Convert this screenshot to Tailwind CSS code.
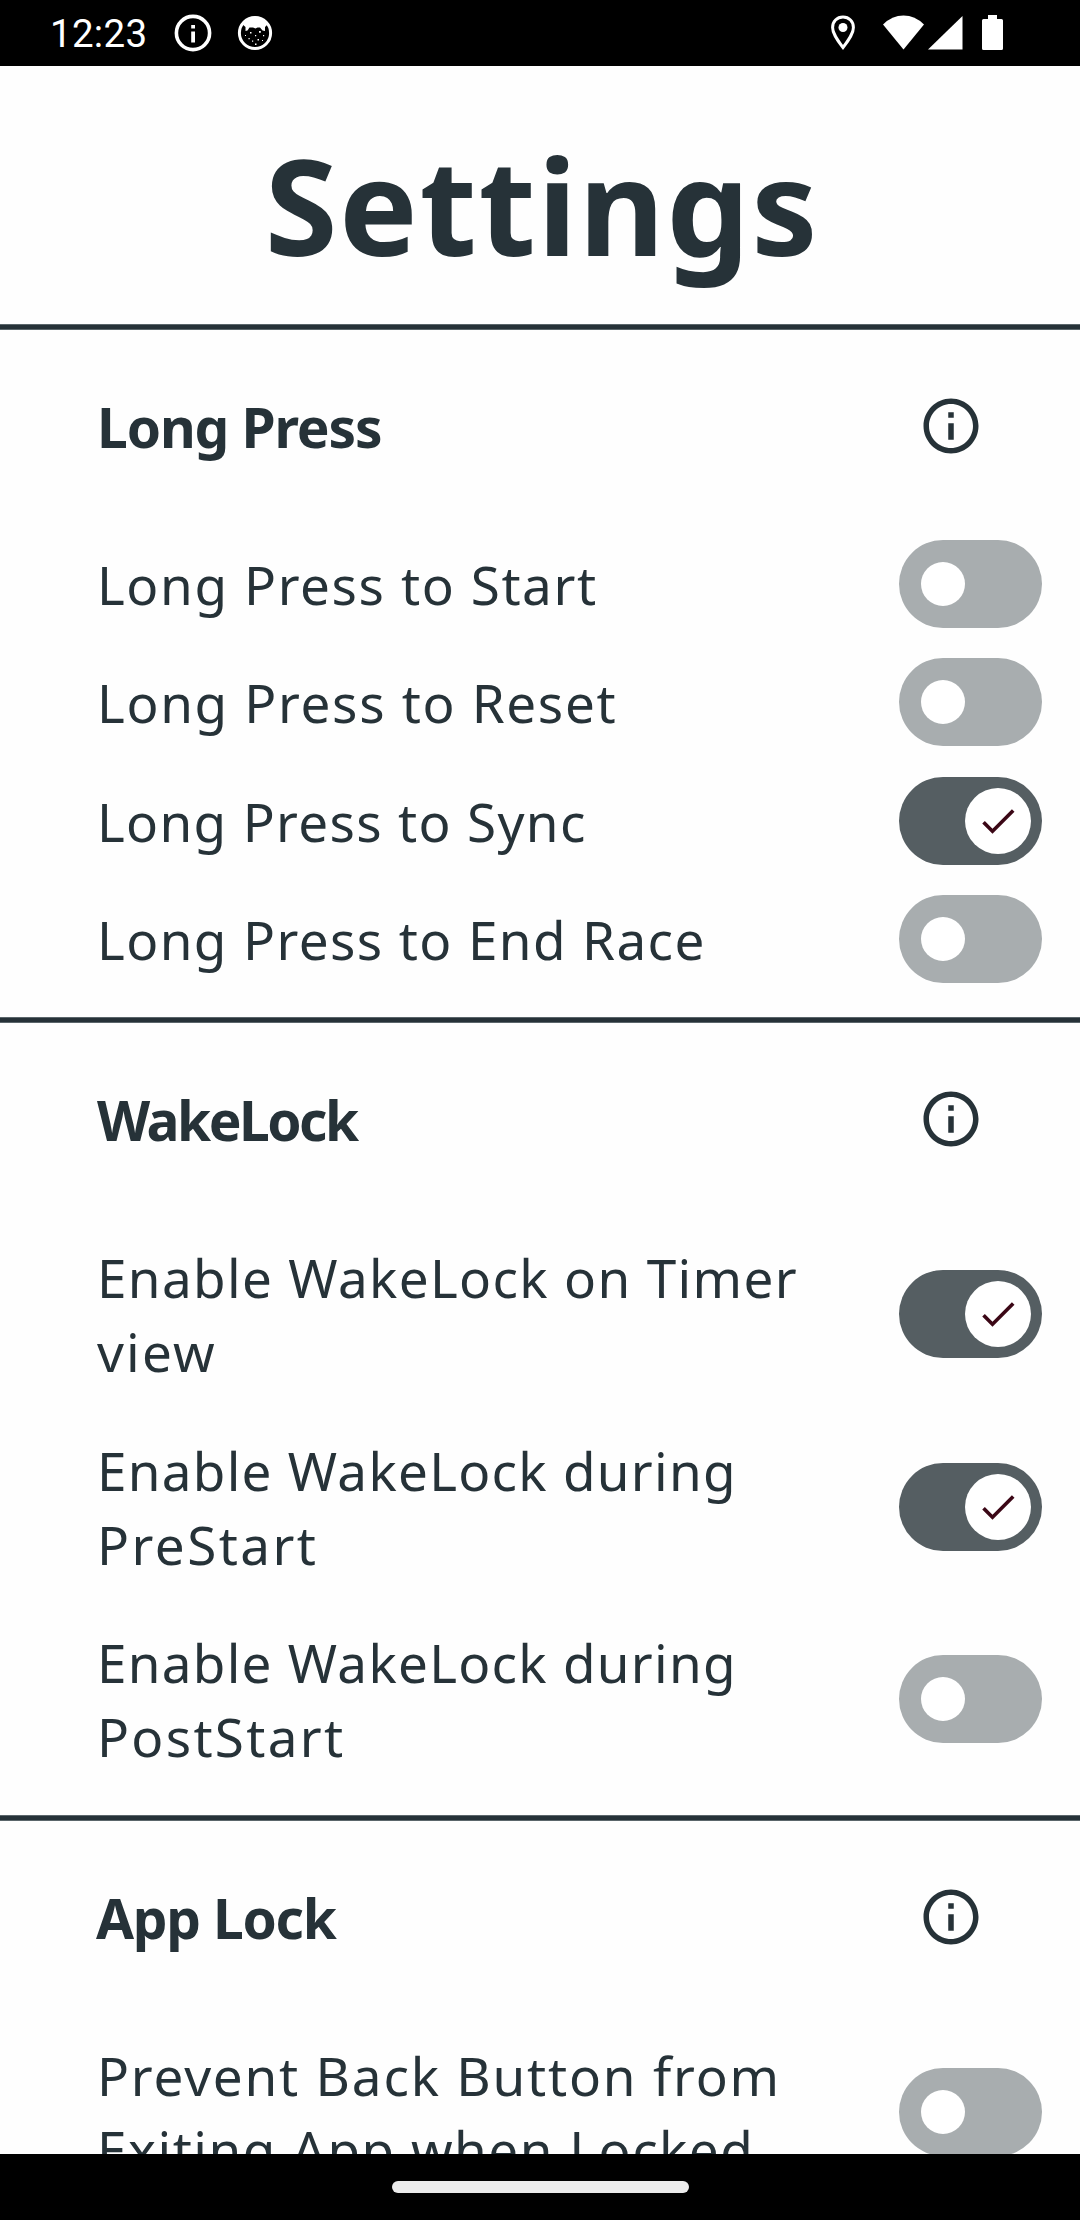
<!DOCTYPE html>
<html lang="en">
<head>
	<meta charset="UTF-8">
	<meta name="viewport" content="width=device-width, initial-scale=1.0">
	<title>Settings</title>
	<script src="https://cdn.jsdelivr.net/npm/@tailwindcss/browser@4"></script>
</head>
<body class="w-[1080px] h-[2220px] overflow-hidden flex flex-col bg-[#fefefe] text-[#263238] font-['Noto_Sans',sans-serif]">
	<!-- Shared icons -->
	<svg class="hidden">
		<symbol id="info" viewBox="0 0 24 24">
			<path d="M11 7h2v2h-2zm0 4h2v6h-2zm1-9C6.48 2 2 6.48 2 12s4.48 10 10 10 10-4.48 10-10S17.52 2 12 2zm0 18c-4.41 0-8-3.59-8-8s3.59-8 8-8 8 3.59 8 8-3.59 8-8 8z"/>
		</symbol>
		<symbol id="check" viewBox="0 0 24 24">
			<path d="M9 16.17 4.83 12l-1.42 1.41L9 19 21 7l-1.41-1.41z"/>
		</symbol>
	</svg>

	<!-- Status bar -->
	<div class="h-[66px] shrink-0 bg-black text-white fill-white flex items-center justify-between pl-[50px] pr-[77px]">
		<div class="flex items-center">
			<span class="w-[121px] font-[Roboto,sans-serif] text-[38.5px] leading-none tracking-[0.3px] pt-[3px]">12:23</span>
			<svg class="w-11 h-11" viewBox="0 0 44 44">
				<circle cx="22" cy="22" r="16.6" fill="none" stroke="white" stroke-width="3.6"/>
				<path d="M20.2 14h3.8v3.6h-3.8zM20.2 20.5h3.8v11h-3.8z"/>
			</svg>
			<svg class="w-9 h-9 ml-[22px]" viewBox="0 0 36 36">
				<circle cx="18" cy="18" r="15.6" fill="none" stroke="white" stroke-width="3"/>
				<path d="M5 9Q10 1.500 18 1.500T31 9L28 12V16L25.500 15.500L23 12.500H20.500L18.500 13.500L16 12.500H12.500L10.500 15.500L8.500 16V12Z"/>
				<path d="M13 17h1.500v1.500H13zM22 16h1.800v1.800H22zM8 20h1v1H8zM18 20h1.200v1.200H18zM26 20h1.200v1.200H26zM11.500 23h1.200v1.200h-1.200zM15 25.500h1.200v1.200H15zM20.500 24h1.500v1.500h-1.500zM25 25h1v1h-1zM18 28.500h1.500V30H18z"/>
			</svg>
		</div>
		<div class="flex items-center">
			<svg class="w-[26px] h-9" viewBox="0 0 26 36">
				<path d="M13 2C6.900 2 2.600 6.600 2.600 12.400C2.600 19.500 13 32.500 13 32.500S23.400 19.500 23.400 12.400C23.400 6.600 19.100 2 13 2Z" fill="none" stroke="white" stroke-width="3"/>
				<circle cx="13" cy="12.500" r="4.500"/>
			</svg>
			<svg class="w-[42px] h-9 ml-[27px]" viewBox="0 0 42 36">
				<path d="M0 9.500Q9 .500 20.500 .500T41 9.500L20.500 34.500Z"/>
			</svg>
			<svg class="w-[35px] h-9 ml-[3px]" viewBox="0 0 35 36">
				<path d="M34.500 1V34.500H0Z"/>
			</svg>
			<svg class="w-[21px] h-9 ml-[19px]" viewBox="0 0 21 36">
				<path d="M6 0h9v4h4.500q1.500 0 1.500 1.500v28q0 1.500-1.500 1.500h-18q-1.500 0-1.500-1.500v-28q0-1.500 1.500-1.500H6z"/>
			</svg>
		</div>
	</div>

	<main class="h-[2088px] shrink-0 overflow-hidden">
		<header class="h-[258px] pt-[19px] pl-1 flex items-center justify-center">
			<h1 class="text-[132px] leading-none font-bold tracking-[1.7px]">Settings</h1>
		</header>

		<!-- Long Press -->
		<section class="h-[693px]">
			<div class="h-1.5 bg-[#263238] border-y border-[#5b666b]"></div>
			<div class="h-[195px] pb-[3px] pl-[97px] pr-24 flex items-center justify-between">
				<h2 class="pt-0.5 text-[55px] font-bold tracking-[-1.1px]">Long Press</h2>
				<svg class="w-[66px] h-[66px] fill-[#263238]"><use href="#info"/></svg>
			</div>
			<div class="h-[118.25px] pl-[97px] pr-[38px] flex items-center justify-between">
				<span class="pt-0.5 text-[53px] leading-[74px] tracking-[1.6px]">Long Press to Start</span>
				<div class="w-[143px] h-[88px] rounded-full bg-[#a8adaf] flex items-center pl-[22px]">
					<div class="w-11 h-11 rounded-full bg-white"></div>
				</div>
			</div>
			<div class="h-[118.25px] pl-[97px] pr-[38px] flex items-center justify-between">
				<span class="pt-0.5 text-[53px] leading-[74px] tracking-[1.67px]">Long Press to Reset</span>
				<div class="w-[143px] h-[88px] rounded-full bg-[#a8adaf] flex items-center pl-[22px]">
					<div class="w-11 h-11 rounded-full bg-white"></div>
				</div>
			</div>
			<div class="h-[118.25px] pl-[97px] pr-[38px] flex items-center justify-between">
				<span class="pt-0.5 text-[53px] leading-[74px] tracking-[1.34px]">Long Press to Sync</span>
				<div class="w-[143px] h-[88px] rounded-full bg-[#555e62] flex items-center justify-end pr-[11px]">
					<div class="w-[66px] h-[66px] rounded-full bg-white flex items-center justify-center">
						<svg class="w-11 h-11 fill-[#3b0716]"><use href="#check"/></svg>
					</div>
				</div>
			</div>
			<div class="h-[118.25px] pl-[97px] pr-[38px] flex items-center justify-between">
				<span class="pt-0.5 text-[53px] leading-[74px] tracking-[1.4px]">Long Press to End Race</span>
				<div class="w-[143px] h-[88px] rounded-full bg-[#a8adaf] flex items-center pl-[22px]">
					<div class="w-11 h-11 rounded-full bg-white"></div>
				</div>
			</div>
		</section>

		<!-- WakeLock -->
		<section class="h-[798px]">
			<div class="h-1.5 bg-[#263238] border-y border-[#5b666b]"></div>
			<div class="h-[195px] pb-[3px] pl-[97px] pr-24 flex items-center justify-between">
				<h2 class="pt-0.5 text-[55px] font-bold tracking-[-2.5px]">WakeLock</h2>
				<svg class="w-[66px] h-[66px] fill-[#263238]"><use href="#info"/></svg>
			</div>
			<div class="h-[192.5px] pl-[97px] pr-[38px] flex items-center justify-between">
				<p class="pt-0.5 text-[53px] leading-[74px]">
					<span class="block tracking-[1.35px]">Enable WakeLock on Timer</span>
					<span class="block tracking-[2.2px]">view</span>
				</p>
				<div class="w-[143px] h-[88px] rounded-full bg-[#555e62] flex items-center justify-end pr-[11px]">
					<div class="w-[66px] h-[66px] rounded-full bg-white flex items-center justify-center">
						<svg class="w-11 h-11 fill-[#3b0716]"><use href="#check"/></svg>
					</div>
				</div>
			</div>
			<div class="h-[192.5px] pl-[97px] pr-[38px] flex items-center justify-between">
				<p class="pt-0.5 text-[53px] leading-[74px]">
					<span class="block tracking-[1.28px]">Enable WakeLock during</span>
					<span class="block tracking-[2.45px]">PreStart</span>
				</p>
				<div class="w-[143px] h-[88px] rounded-full bg-[#555e62] flex items-center justify-end pr-[11px]">
					<div class="w-[66px] h-[66px] rounded-full bg-white flex items-center justify-center">
						<svg class="w-11 h-11 fill-[#3b0716]"><use href="#check"/></svg>
					</div>
				</div>
			</div>
			<div class="h-[192.5px] pl-[97px] pr-[38px] flex items-center justify-between">
				<p class="pt-0.5 text-[53px] leading-[74px]">
					<span class="block tracking-[1.28px]">Enable WakeLock during</span>
					<span class="block tracking-[2.3px]">PostStart</span>
				</p>
				<div class="w-[143px] h-[88px] rounded-full bg-[#a8adaf] flex items-center pl-[22px]">
					<div class="w-11 h-11 rounded-full bg-white"></div>
				</div>
			</div>
		</section>

		<!-- App Lock -->
		<section>
			<div class="h-1.5 bg-[#263238] border-y border-[#5b666b]"></div>
			<div class="h-[195px] pb-[3px] pl-24 pr-24 flex items-center justify-between">
				<h2 class="pt-0.5 text-[55px] font-bold tracking-[-1.25px]">App Lock</h2>
				<svg class="w-[66px] h-[66px] fill-[#263238]"><use href="#info"/></svg>
			</div>
			<div class="h-[192.5px] pl-[97px] pr-[38px] flex items-center justify-between">
				<p class="pt-0.5 text-[53px] leading-[74px]">
					<span class="block tracking-[1.8px]">Prevent Back Button from</span>
					<span class="block tracking-[1.5px]">Exiting App when Locked</span>
				</p>
				<div class="w-[143px] h-[88px] rounded-full bg-[#a8adaf] flex items-center pl-[22px]">
					<div class="w-11 h-11 rounded-full bg-white"></div>
				</div>
			</div>
		</section>
	</main>

	<!-- Gesture navigation bar -->
	<div class="h-[66px] shrink-0 bg-black flex items-center justify-center">
		<div class="w-[297px] h-3 rounded-full bg-[#ececec]"></div>
	</div>
</body>
</html>
